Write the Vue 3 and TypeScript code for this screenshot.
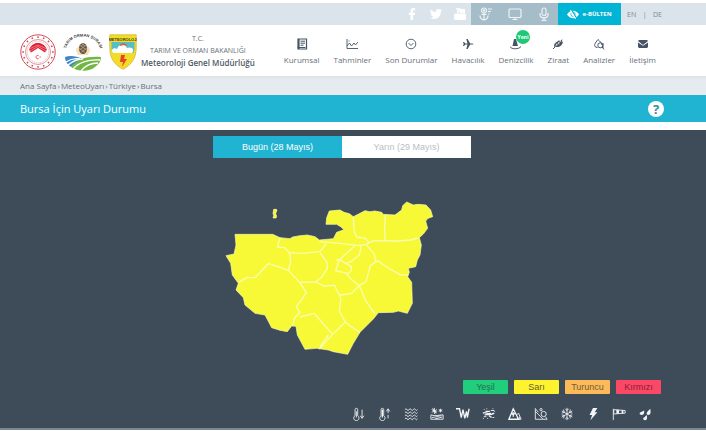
<script setup lang="ts">
import { ref } from 'vue'

interface Level { name: string; tone: string }

const day = ref<number>(0)
const days: string[] = ['Bugün (28 Mayıs)', 'Yarın (29 Mayıs)']
const crumbs: string[] = ['Ana Sayfa', 'MeteoUyarı', 'Türkiye', 'Bursa']
const levels: Level[] = [
  { name: 'Yeşil', tone: 'green' },
  { name: 'Sarı', tone: 'yellow' },
  { name: 'Turuncu', tone: 'orange' },
  { name: 'Kırmızı', tone: 'red' },
]
const rim: number[] = Array.from({ length: 16 }, (_, i) => i * 22.5)
</script>

<template>
  <div class="page">
    <div class="topbar">
      <nav class="social" aria-label="Sosyal medya">
        <a href="#" aria-label="Facebook"><svg viewBox="0 0 12 12"><path fill="currentColor" d="M4.500 12V7H2.800V4.800h1.700V3.200C4.500 1.200 5.600 0 7.500 0h1.700v2.200H8c-.8 0-1 .4-1 1v1.600h2.200L8.900 7H7v5z" /></svg></a>
        <a href="#" aria-label="Twitter"><svg viewBox="0 0 12 12"><path fill="currentColor" d="M12 2.600l-1.200 1.200C10.800 8 8 11 4 11 2.500 11 1.100 10.600 0 9.900c1.300.1 2.500-.2 3.500-1C2.400 8.800 1.500 8.100 1.200 7.100h1.100C1.100 6.800.4 5.800.4 4.600l1.100.3C.4 4.100.1 2.700.8 1.600c1.300 1.500 3 2.400 5.100 2.500C5.500 2.300 6.800 1 8.300 1c.7 0 1.400.3 1.800.8l1.600-.6-1.100 1.400z" /></svg></a>
        <a href="#" aria-label="YouTube"><svg viewBox="0 0 12 12"><path fill="currentColor" d="M1 5.500h10l1 1V11l-1 1H1l-1-1V6.500z" /><path fill="none" stroke="currentColor" stroke-width="1.400" d="M2.500 0l1.400 2.500V5M5.200 0L3.900 2.500M6 1.500h1.300V4H6zM8.800 1v3.200h1.500V1" /></svg></a>
      </nav>
      <div class="tools">
        <a href="#" aria-label="Denizcilik"><svg viewBox="0 0 14 14" fill="none" stroke="currentColor" stroke-width="1.200"><circle cx="5" cy="3.500" r="2.500" /><circle cx="5" cy="3.500" r=".6" /><path d="M5 6v7M2.500 7.500h5M1 8.500C1 11 2.500 12.500 5 13c2.500-.5 4-2 4-4.500M9 2h4M9 4.500h3M9 7h1.500" /></svg></a>
        <a href="#" aria-label="Ekran"><svg viewBox="0 0 14 14" fill="none" stroke="currentColor" stroke-width="1.200"><rect x="1" y="2" width="12" height="8.500" rx="1" /><path d="M4.500 12.500h5M7 10.500v2" /></svg></a>
        <a href="#" aria-label="Sesli"><svg viewBox="0 0 14 14" fill="none" stroke="currentColor" stroke-width="1.200"><rect x="5" y="1" width="4" height="7.500" rx="2" /><path d="M3 6v1.500C3 12 11 12 11 7.500V6M7 11v2.500M4.500 13.400h5" /></svg></a>
      </div>
      <a class="bulletin" href="#">
        <svg viewBox="0 0 14 10"><path fill="currentColor" d="M0 5C3.500-.7 10.500-.7 14 5c-3.500 5.700-10.500 5.700-14 0z" /><circle cx="7" cy="4.700" r="2.500" fill="none" stroke="#00b4d5" stroke-width=".9" /><path stroke="#00b4d5" stroke-width="1.400" d="M5.500 0l6 10" /><path stroke="currentColor" stroke-width="1.300" d="M4 0l6 10" /></svg>
        e-BÜLTEN
      </a>
      <nav class="lang" aria-label="Dil"><a href="#">EN</a><span>|</span><a href="#">DE</a></nav>
    </div>

    <header class="header">
      <a class="brand" href="#">
        <svg class="logo" viewBox="0 0 36 36">
          <circle cx="18" cy="18" r="17.200" fill="#fff" stroke="#cf4b58" stroke-width="1" />
          <g fill="#d4505c"><rect v-for="a in rim" :key="a" x="17.200" y="2.300" width="1.600" height="1.600" :transform="`rotate(${a} 18 18)`" /></g>
          <circle cx="18" cy="18" r="12.500" fill="none" stroke="#d77a84" stroke-width=".8" />
          <circle cx="18" cy="18" r="10.800" fill="none" stroke="#de8992" stroke-width=".6" stroke-dasharray="1.200 .8" />
          <path fill="#e01f32" d="M9 15.500C11 10.500 15 9 18 9s7 1.500 9 6.500l-2 3-7-4.500-7 4.500z" />
          <path fill="none" stroke="#fff" stroke-width=".4" d="M9 15l9-4 9 4M10 17l8-4.500 8 4.500" />
          <path fill="none" stroke="#e01f32" stroke-width=".8" d="M18.500 21.600a1.700 1.700 0 1 0 0 3M19.500 23h1.300" />
        </svg>
        <svg class="logo wide" viewBox="0 0 40 38">
          <defs><path id="arc" d="M3 17C5-1 35-1 37 17" /></defs>
          <text class="arc-text"><textPath href="#arc" startOffset="50%" text-anchor="middle">TARIM ORMAN ŞURASI</textPath></text>
          <path fill="#f5dfb4" d="M13 17c1-6 13-6 14 0l-2 5H15z" />
          <ellipse cx="20" cy="15.500" rx="4" ry="5.500" fill="#655344" />
          <path fill="none" stroke="#d1bba0" stroke-width=".6" d="M16.500 12l7 5M16 15l6 4.500M23.500 12l-7 5M24 15l-6 4.500M18 10l4 3M22 10l-4 3" />
          <path fill="#3d86c8" d="M2 24c5-2 11-1 18 2-5 2-9 5-12 8C4 31 2 28 2 24z" />
          <path fill="#72b744" d="M38 24c-14-1-24 2-30 10 7 5 18 5 24 0 4-3 6-6 6-10z" />
          <path fill="none" stroke="#fff" stroke-width="1.300" d="M3 29c6-4 10-4 14-3M5 32c5-4 9-6 15-6M10 36c5-6 15-10 27-9M18 38c4-5 10-8 17-8" />
        </svg>
        <svg class="logo shield" viewBox="0 0 28 36">
          <path fill="#f3dc27" stroke="#d6b92f" stroke-width=".8" d="M.8.8h26.400v13C27.200 25 22 31 14 35.300 6 31 .8 25 .8 13.800z" />
          <path fill="#56bec6" d="M2.500 8h23v7l-1 4h-21l-1-4z" />
          <text class="shield-text" x="14" y="6.500" text-anchor="middle">METEOROLOJİ</text>
          <path fill="#fff" d="M4 19c-3-3 1-6 4-4 2-6 9-5 10-1 5-2 8 2 5 5z" />
          <path fill="#e65a37" d="M11 11c2-3 7-2 7 1l-3-1-4 1z" />
          <path fill="#e54528" d="M12 21h4l-1 4h3l-5 8 1-5h-3z" />
        </svg>
        <span class="titles"><span>T.C.</span><span>TARIM VE ORMAN BAKANLIĞI</span><b>Meteoroloji Genel Müdürlüğü</b></span>
      </a>
      <nav class="menu" aria-label="Ana menü">
        <a href="#"><svg viewBox="0 0 12 12"><path fill="none" stroke="currentColor" stroke-width="1.200" d="M2 1h8.500v10H2zM3 1v10" /><path stroke="currentColor" d="M4.500 3.200H9M4.500 5.200H9M4.500 7.200h3M1.500 9.500h8" /></svg>Kurumsal</a>
        <a href="#"><svg viewBox="0 0 12 12" fill="none" stroke="currentColor" stroke-width=".9"><path d="M1 1v9.500h11M1 8l2.500-3L5.500 8 8 5l1.500 2L12 4M2.500 3h1" /></svg>Tahminler</a>
        <a href="#"><svg viewBox="0 0 12 12" fill="none" stroke="currentColor" stroke-width=".9"><circle cx="6" cy="6" r="4.800" /><path d="M3.500 5L6 7.500 8.500 5" /></svg>Son Durumlar</a>
        <a href="#"><svg viewBox="0 0 12 12"><path fill="currentColor" d="M1 4h1l1.500 1.400H5.500L4.300 1h1.300l2.600 4.400H10c2 0 2 1.200 0 1.200H8.200L5.600 11H4.300l1.200-4.400h-2L2 8H1l.7-2z" /></svg>Havacılık</a>
        <a class="has-badge" href="#"><svg viewBox="0 0 12 12"><path fill="currentColor" d="M4 1h2l2 7H2.500z" /><path fill="none" stroke="currentColor" d="M0 8.500c1 3 9 3 11 0" /></svg>Denizcilik<span class="badge">Yeni</span></a>
        <a href="#"><svg viewBox="0 0 12 12"><path fill="currentColor" d="M2 8.500C2 4 6 4 7 2l.8 1.500L10.500 1 9.700 4l1.300-.5C10.500 7 8 9.500 3.500 9z" /><path stroke="currentColor" d="M1 11l3-3" /><path stroke="#fff" stroke-width=".6" d="M3 8.500L9 3M4 5.500l1 2M6.500 4L7 6.500" /></svg>Ziraat</a>
        <a href="#"><svg viewBox="0 0 12 12" fill="none" stroke="currentColor"><path d="M4.500 9.500C-.5 9 2 5 5 1.500 7 3.500 9 5 9 7" /><circle cx="7.300" cy="7.300" r="2.500" /><path d="M9 9l2 2.500M10 5v5" /></svg>Analizler</a>
        <a href="#"><svg viewBox="0 0 12 12"><path fill="currentColor" d="M1 3l1-1h8l1 1L6 7zM1 4.500l5 3.300 5-3.300V9l-1 1H2L1 9z" /></svg>İletişim</a>
      </nav>
    </header>

    <nav class="crumbs" aria-label="Konum">
      <template v-for="(c, i) in crumbs" :key="c"><span v-if="i">›</span><a href="#">{{ c }}</a></template>
    </nav>
    <div class="heading">
      <h1>Bursa İçin Uyarı Durumu</h1>
      <button type="button" class="help" aria-label="Yardım">?</button>
    </div>

    <main class="board">
      <div class="tabs">
        <button v-for="(d, i) in days" :key="d" type="button" :class="{ active: day === i }" @click="day = i">{{ d }}</button>
      </div>
      <svg class="map" viewBox="75 15 702 468" role="img" aria-label="Bursa haritası">
        <path class="land" d="M105 118L218 118 240 128 270 131 278 126 300 122 322 120 345 125 358 135 400 131 410 112 432 104 422 95 410 88 378 88 380 68 388 48 420 45 432 52 448 56 460 65 480 55 495 47 509 50 525 48 545 52 550 58 585 60 605 45 608 32 620 21 640 30 654 28 678 30 692 45 698 65 684 70 677 78 683 100 670 117 658 128 664 150 660 180 652 195 647 215 625 220 628 232 623 245 635 262 637 325 622 355 595 348 580 352 535 353 520 372 480 412 460 445 443 478 400 470 385 465 350 460 315 463 292 420 288 394 275 393 262 410 240 406 215 398 195 360 165 355 135 330 130 308 108 285 115 265 97 240 92 205 78 182 102 177 108 150z" />
        <path class="land" d="M221 43h8l2 2-4 11 3 8-2 5h-9l2-7-2-7z" />
        <path class="border" d="M240 128L232 156 254 158 268 173 272 201 265 226 299 262 319 292 307 311 289 336 300 352 284 368 278 392M268 173L306 175 360 170 378 146M115 263L140 248 165 248 205 206 235 215 265 226M299 262L347 261 366 245 382 220 381 202 360 174M347 261L371 273 404 271 414 293 421 300 453 296 459 290 478 272 498 260 511 212 532 197 565 219 600 239 625 240M358 140L420 145 472 151 492 150 522 137 592 138 632 135 658 128M460 65L462 107 470 126 498 131 508 146M556 60L554 95 555 137M465 152L437 177 417 197 407 227 438 234 452 251 478 272M478 272L497 317 525 357M407 197L418 193 437 205 452 200 478 180 484 150M437 205L454 215 453 229 441 238M500 150L523 178 527 203M417 300L423 310 418 348 436 381 398 418 358 462M436 381L451 393 480 412M360 375L398 418M300 366L342 355 360 375M385 420L360 455" />
      </svg>
      <div class="foot">
        <ul class="levels"><li v-for="l in levels" :key="l.name" :class="l.tone">{{ l.name }}</li></ul>
        <div class="hazards">
          <svg viewBox="0 0 16 16"><path d="M3.500 10V3a1.500 1.500 0 0 1 3 0v7a3 3 0 1 1-3 0zM5 5v7M11.500 3v9M9.500 10l2 3 2-3" /></svg>
          <svg viewBox="0 0 16 16"><path d="M3.500 10V3a1.500 1.500 0 0 1 3 0v7a3 3 0 1 1-3 0zM11.500 13V9M9.500 5l2-3 2 3M11.500 3v4" /><path class="thick" d="M5 3v9" /></svg>
          <svg viewBox="0 0 16 16"><path d="M1 3q1.200-2 2.400 0t2.400 0 2.400 0 2.400 0 2.400 0 2.400 0M1 6.500q1.200-2 2.400 0t2.400 0 2.400 0 2.400 0 2.400 0 2.400 0M1 10q1.200-2 2.400 0t2.400 0 2.400 0 2.400 0 2.400 0 2.400 0M1 13.500q1.200-2 2.400 0t2.400 0 2.400 0 2.400 0 2.400 0 2.400 0" /></svg>
          <svg viewBox="0 0 16 16"><path d="M5 1v7M2 3l6 3M8 3L2 6M3 1.500l4 6M12 2v4M10 3l4 2M14 3l-4 2M1 9c5 2 9 0 14 0v5H1zM2 12c5 0 7-2 11-2M6 13.500l8-2" /></svg>
          <svg viewBox="0 0 16 16"><path class="thick" d="M0 2h4l2 10 2-9 2 10 2-8 1 7 2-10" /></svg>
          <svg viewBox="0 0 16 16"><path class="thick" d="M1 7c4-2 5 2 9 0M3 9c4-1 6 1 11-2M4 5h5M8 10l3 2" /><path d="M2 3h1M5 2h1M12 2h1M10 4h4M14 5h1M2 11h3M6 13h1M12 12h2M1 13h1" /></svg>
          <svg viewBox="0 0 16 16"><path class="thick" d="M1 14L6 2l6 12zM4 7l2 2 2-2M6 6v5" /><path d="M10 9l2-2 3 7H10M11 11v3M13 11v3" /></svg>
          <svg viewBox="0 0 16 16"><path d="M1.500 1.500V14H15l-2-3M1.500 5L10 13.500M1.500 2L5 6" /><circle cx="11" cy="8" r="3" /><circle cx="8" cy="3" r="1.300" /></svg>
          <svg viewBox="0 0 16 16"><path d="M8 1v14M2 4.500l12 7M14 4.500l-12 7M6 2l2 2 2-2M6 14l2-2 2 2M2 7l3-.8L4 3M14 9l-3 .8.800 3.200M2 9l3 .8L4 13M14 7l-3-.8.800-3.200" /></svg>
          <svg viewBox="0 0 16 16"><path class="solid" d="M8 1h5l-3 5h3L5 15l2-6H4z" /></svg>
          <svg viewBox="0 0 16 16"><path d="M1.500 15V2M2 3l13 1v3L2 8z" /><path class="solid" d="M5 3l3 .3v4.200L5 7.800zM11 3.600l2 .2V7l-2 .3z" /></svg>
          <svg viewBox="0 0 16 16"><path class="solid" d="M7 4c.5 4-1 5-3 5s-3-2-1-3zM14 2c1 5 0 7-2 7s-3-2-1-4zM10 9c1 4 0 6-2 6s-3-2-1-3z" /></svg>
        </div>
      </div>
    </main>
    <div class="edge"></div>
  </div>
</template>

<style>
body { margin: 0; background: #fff; }
</style>

<style scoped>
* { box-sizing: border-box; }
.page { padding-top: 3px; font-family: "Open Sans", "Noto Sans", sans-serif; font-size: 8px; color: #697078; }
a { color: inherit; text-decoration: none; }
svg { display: block; }
button { border: 0; padding: 0; font: inherit; cursor: pointer; }
.topbar { display: flex; justify-content: flex-end; align-items: stretch; height: 22px; padding-right: 44px; background: #dbe4ea; }
.social { display: flex; align-items: center; gap: 12px; padding-right: 5px; color: #fff; }
.social svg { width: 12px; height: 12px; }
.tools { display: flex; align-items: center; justify-content: space-around; width: 87px; background: #a5bcc9; color: #edf3f6; }
.tools svg { width: 14px; height: 14px; }
.bulletin { display: flex; align-items: center; justify-content: center; gap: 3px; width: 63px; background: #00b4d5; color: #fff; font-size: 6px; font-weight: 700; }
.bulletin svg { width: 12px; height: 9px; }
.lang { display: flex; align-items: center; justify-content: space-between; width: 41px; padding-left: 6px; font-size: 7px; color: #80898f; }
.header { display: flex; justify-content: space-between; height: 51px; padding: 0 50px 0 20px; background: #fff; }
.brand { display: flex; align-items: center; }
.logo { width: 36px; height: 36px; margin-top: 2px; }
.wide { width: 40px; height: 38px; margin-left: 7px; }
.shield { width: 28px; margin-left: 6px; }
.arc-text { font: 700 4px "Liberation Sans", sans-serif; fill: #3d3d3d; }
.shield-text { font: 700 4px "Liberation Sans", sans-serif; fill: #403c24; }
.titles { display: flex; flex-direction: column; align-items: center; margin-left: 4px; line-height: 12px; white-space: nowrap; }
.titles span { font-size: 7px; }
.titles b { font-size: 8px; font-weight: 600; color: #505963; }
.menu { display: flex; gap: 14px; padding-top: 13px; }
.menu a { display: flex; flex-direction: column; align-items: center; gap: 4px; line-height: 12px; white-space: nowrap; }
.menu svg { width: 12px; height: 12px; color: #465464; }
.has-badge { position: relative; }
.badge { position: absolute; top: -8px; left: 50%; width: 14px; height: 14px; border-radius: 50%; background: #20c875; color: #fff; font-size: 5px; font-weight: 700; line-height: 14px; text-align: center; }
.crumbs { display: flex; align-items: center; gap: 1px; height: 19px; padding: 0 20px; background: linear-gradient(#dce1e4, #e5ebee 4px); }
.heading { display: flex; align-items: center; justify-content: space-between; height: 27px; padding: 0 42px 0 20px; background: #20b4d2; color: #fff; }
.heading h1 { margin: 0; font-size: 11px; font-weight: 400; }
.help { width: 16px; height: 16px; border-radius: 50%; background: #fff; color: #348ca6; font-size: 13px; font-weight: 700; line-height: 16px; }
.board { display: flex; flex-direction: column; align-items: center; margin-top: 8px; padding: 6px 42px 7px 20px; background: #3e4b59; font-family: "Liberation Sans", Arial, sans-serif; font-size: 9px; }
.tabs { display: flex; width: 40%; min-width: 258px; height: 22px; }
.tabs button { flex: 1; background: #fff; color: #b9bec3; }
.tabs .active { background: #20b4d2; color: #fff; }
.map { width: 234px; height: 156px; margin-top: 42px; }
.land { fill: #f7f936; stroke: #fbfcb0; stroke-width: 2; }
.border { fill: none; stroke: #fafcae; stroke-width: 4; stroke-linejoin: round; }
.foot { display: flex; flex-direction: column; align-items: flex-end; gap: 13px; width: 100%; margin-top: 24px; padding-right: 3px; }
.levels { display: flex; gap: 6px; margin: 0; padding: 0; list-style: none; }
.levels li { width: 45px; height: 14px; border-radius: 1px; line-height: 14px; text-align: center; }
.green { background: #20ce7b; color: #276f50; }
.yellow { background: #fff22f; color: #625e31; }
.orange { background: #fcbb58; color: #765a38; }
.red { background: #fb4866; color: #8a2037; }
.hazards { display: flex; gap: 12px; padding-right: 9px; color: #f2f5f7; }
.hazards svg { width: 14px; height: 14px; fill: none; stroke: currentColor; stroke-width: 1; }
.hazards .thick { stroke-width: 1.5; }
.hazards .solid { fill: currentColor; stroke: none; }
.edge { height: 2px; background: #7c8790; }
</style>
